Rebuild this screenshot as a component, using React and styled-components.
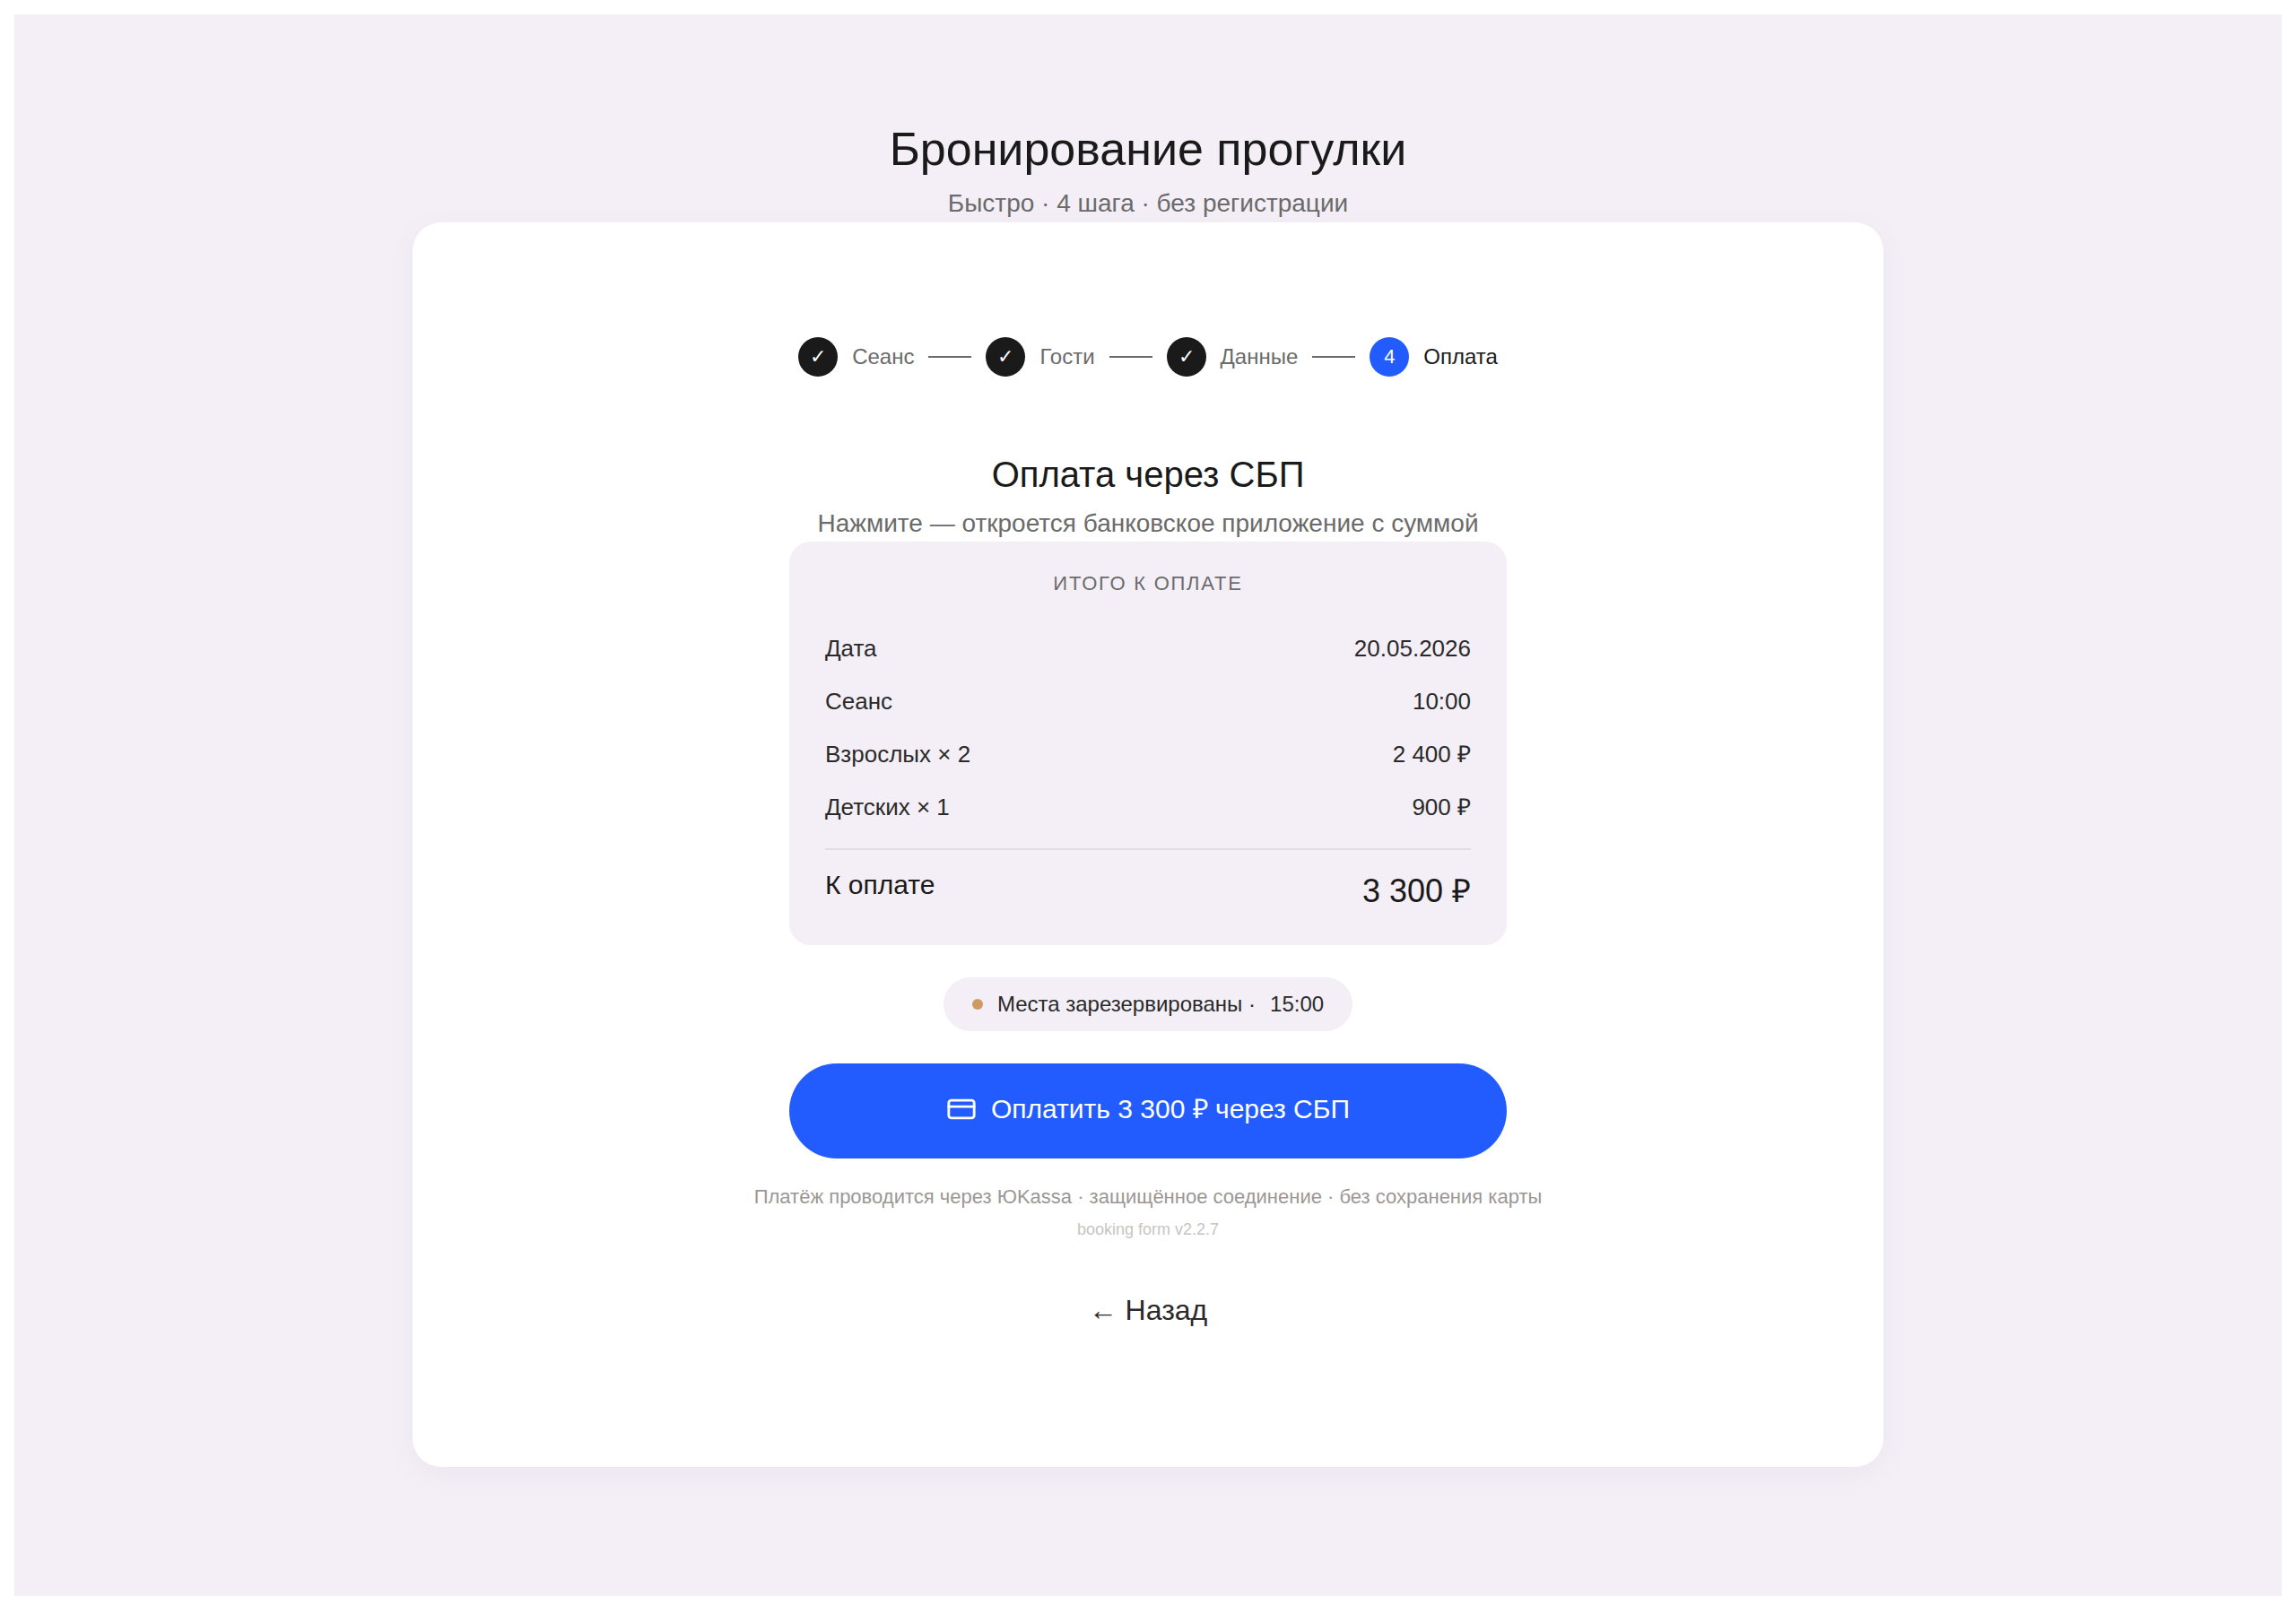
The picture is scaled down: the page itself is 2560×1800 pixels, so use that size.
import React from 'react';
import styled, { createGlobalStyle } from 'styled-components';
import { CreditCard } from 'lucide-react';

const GlobalStyle = createGlobalStyle`
  html, body { margin: 0; padding: 0; background: #ffffff; }
  body { font-family: "Liberation Sans", Arial, sans-serif; color: #1a1a1a; }
`
const Page = styled.div`
  margin: 16px 16px 20px;
  height: 1764px;
  padding-top: 119px;
  box-sizing: border-box;
  background: #f4eff6;
  display: flex;
  flex-direction: column;
  align-items: center;
`
const PageTitle = styled.h1`
  margin: 0;
  font-size: 52px;
  line-height: 62px;
  font-weight: 400;
  color: #1a1a1a;
`
const PageSub = styled.p`
  margin: 12px 0 3px;
  font-size: 28px;
  line-height: 36px;
  color: #6b6b6b;
`
const Card = styled.main`
  width: 1640px;
  height: 1388px;
  box-sizing: border-box;
  padding-top: 128px;
  background: #ffffff;
  border-radius: 32px;
  box-shadow: 0 8px 32px rgba(100, 60, 160, 0.06);
  display: flex;
  flex-direction: column;
  align-items: center;
`
const Steps = styled.ol`
  margin: 0;
  padding: 0;
  list-style: none;
  display: flex;
  align-items: center;
  gap: 16px;
`
const Step = styled.li`
  display: flex;
  align-items: center;
  gap: 16px;
  font-size: 24px;
  color: ${p => (p.$active ? '#1a1a1a' : '#6b6b6b')};
`
const StepDot = styled.span`
  width: 44px;
  height: 44px;
  border-radius: 50%;
  display: flex;
  align-items: center;
  justify-content: center;
  font-size: 22px;
  color: #ffffff;
  background: ${p => (p.$active ? '#225cff' : '#1a1a1a')};
`
const StepLine = styled.span`
  width: 48px;
  height: 2px;
  background: #6b6b6b;
`
const Heading = styled.h2`
  margin: 84px 0 0;
  font-size: 40px;
  line-height: 50px;
  font-weight: 400;
  color: #1a1a1a;
`
const Lead = styled.p`
  margin: 12px 0 0;
  font-size: 28px;
  line-height: 36px;
  color: #6b6b6b;
`
const Summary = styled.section`
  width: 800px;
  height: 450px;
  box-sizing: border-box;
  margin-top: 2px;
  padding: 34px 40px 0;
  background: #f4eff6;
  border-radius: 24px;
`
const SummaryLabel = styled.div`
  text-align: center;
  font-size: 22px;
  line-height: 26px;
  letter-spacing: 1.76px;
  color: #6b6b6b;
  margin-bottom: 30px;
`
const Row = styled.div`
  display: flex;
  justify-content: space-between;
  font-size: 26px;
  line-height: 59px;
  color: #2a2a2a;
`
const TotalRow = styled.div`
  display: flex;
  justify-content: space-between;
  align-items: flex-start;
  margin-top: 16px;
  padding-top: 22px;
  border-top: 2px solid #e2dde5;
  font-size: 30px;
  color: #1a1a1a;
`
const TotalValue = styled.span`
  font-size: 36px;
  line-height: 1;
  margin-top: 6px;
`
const Ruble = styled.span`
  font-family: Lato, sans-serif;
  line-height: 0;
`
const Pill = styled.div`
  margin-top: 36px;
  height: 60px;
  padding: 0 32px;
  box-sizing: border-box;
  display: flex;
  align-items: center;
  gap: 16px;
  background: #f4eff6;
  border-radius: 30px;
  font-size: 24px;
  color: #2a2a2a;
`
const PillDot = styled.span`
  width: 12px;
  height: 12px;
  border-radius: 50%;
  background: #d09a64;
`
const PayButton = styled.button`
  margin-top: 36px;
  width: 800px;
  height: 106px;
  padding: 0 0 4px;
  border: none;
  border-radius: 53px;
  background: #225cff;
  color: #ffffff;
  font-family: inherit;
  font-size: 30px;
  line-height: 36px;
  display: flex;
  align-items: center;
  justify-content: center;
  gap: 16px;
`
const Footnote = styled.p`
  margin: 28px 0 0;
  font-size: 22px;
  line-height: 30px;
  color: #9c9794;
`
const Version = styled.p`
  margin: 9px 0 0;
  font-size: 18px;
  line-height: 24px;
  color: #c8c4c0;
`
const BackButton = styled.button`
  margin-top: 60px;
  border: none;
  background: none;
  padding: 0;
  font-family: inherit;
  font-size: 32px;
  color: #2a2a2a;
`

const steps = ['Сеанс', 'Гости', 'Данные'];
const rows = [
  ['Дата', '20.05.2026'],
  ['Сеанс', '10:00'],
  ['Взрослых × 2', <>2 400 <Ruble>₽</Ruble></>],
  ['Детских × 1', <>900 <Ruble>₽</Ruble></>],
];

export default function App() {
  return (
    <>
      <GlobalStyle />
      <Page lang="ru">
        <PageTitle>Бронирование прогулки</PageTitle>
        <PageSub>Быстро · 4 шага · без регистрации</PageSub>
        <Card>
          <Steps>
            {steps.map(s => (
              <React.Fragment key={s}>
                <Step><StepDot>✓</StepDot>{s}</Step>
                <StepLine />
              </React.Fragment>
            ))}
            <Step $active><StepDot $active>4</StepDot>Оплата</Step>
          </Steps>
          <Heading>Оплата через СБП</Heading>
          <Lead>Нажмите — откроется банковское приложение с суммой</Lead>
          <Summary>
            <SummaryLabel>ИТОГО К ОПЛАТЕ</SummaryLabel>
            {rows.map(([k, v]) => (
              <Row key={k}><span>{k}</span><span>{v}</span></Row>
            ))}
            <TotalRow><span>К оплате</span><TotalValue>3 300 <Ruble>₽</Ruble></TotalValue></TotalRow>
          </Summary>
          <Pill><PillDot /><span>Места зарезервированы ·</span><span>15:00</span></Pill>
          <PayButton><CreditCard size={34} strokeWidth={2} /><span>Оплатить 3 300 <Ruble>₽</Ruble> через СБП</span></PayButton>
          <Footnote>Платёж проводится через ЮKassa · защищённое соединение · без сохранения карты</Footnote>
          <Version>booking form v2.2.7</Version>
          <BackButton>← Назад</BackButton>
        </Card>
      </Page>
    </>
  );
}
